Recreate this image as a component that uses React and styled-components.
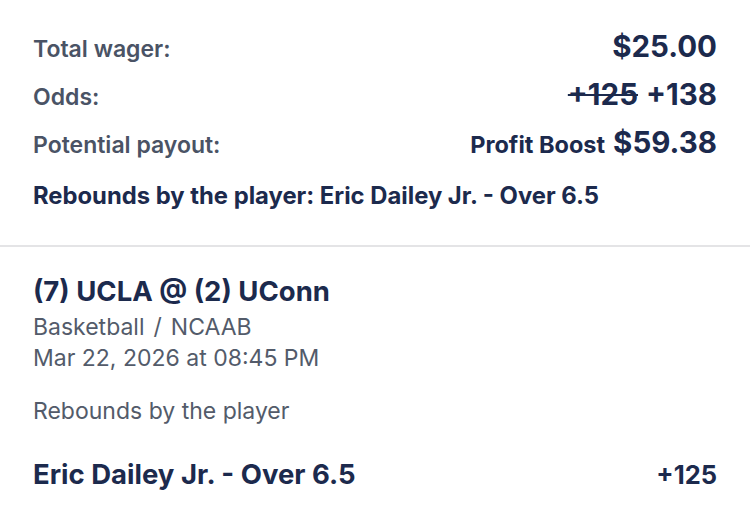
import React from "react";
import styled, { createGlobalStyle } from "styled-components";

const Global = createGlobalStyle`
  html, body { margin: 0; padding: 0; background: #ffffff; }
  body { font-family: Inter, "Noto Sans", sans-serif; -webkit-font-smoothing: antialiased; }
`;

const Page = styled.div`
  width: 750px;
  height: 508px;
  background: #fff;
  overflow: hidden;
`;

const Summary = styled.section`
  padding: 29px 33px 35px 33px;
  display: flex;
  flex-direction: column;
`;

const Row = styled.div`
  display: flex;
  justify-content: space-between;
  align-items: baseline;
  height: 48px;
  line-height: 1.2;
`;

const Label = styled.span`
  font-size: 23px;
  font-weight: 600;
  color: #4a5365;
`;

const Value = styled.span`
  display: flex;
  align-items: baseline;
  gap: 8px;
  font-size: 29.5px;
  font-weight: 700;
  color: #1c2a4d;
`;

const Struck = styled.span`
  text-decoration: line-through;
  text-decoration-thickness: 2px;
`;

const BoostTag = styled.span`
  font-size: 23.5px;
  font-weight: 700;
`;

const Selection = styled.div`
  font-size: 23.8px;
  line-height: 28px;
  font-weight: 700;
  color: #1c2a4d;
  margin-top: 9px;
`;

const Divider = styled.hr`
  border: 0;
  height: 2px;
  background: #e4e4e6;
  margin: 0;
`;

const Detail = styled.section`
  padding: 27px 33px 0 33px;
  display: flex;
  flex-direction: column;
`;

const Matchup = styled.div`
  font-size: 27.5px;
  font-weight: 700;
  color: #1c2a4d;
  line-height: 34px;
  margin-bottom: 4px;
`;

const Meta = styled.div`
  font-size: 23px;
  font-weight: 400;
  color: #535b6a;
  line-height: 31px;
  margin-top: ${(p) => p.$mt || 0}px;
`;

const Slash = styled.span`
  margin: 0 9px;
`;

const PickRow = styled.div`
  display: flex;
  justify-content: space-between;
  align-items: baseline;
  line-height: 34px;
  margin-top: 30px;
`;

const Pick = styled.span`
  font-size: 27.5px;
  font-weight: 700;
  color: #1c2a4d;
`;

const PickOdds = styled.span`
  font-size: 25.5px;
  font-weight: 700;
  color: #1c2a4d;
`;

export default function App() {
  return (
    <Page>
      <Global />
      <Summary>
        <Row>
          <Label>Total wager:</Label>
          <Value>$25.00</Value>
        </Row>
        <Row>
          <Label>Odds:</Label>
          <Value>
            <Struck>+125</Struck>
            <span>+138</span>
          </Value>
        </Row>
        <Row>
          <Label>Potential payout:</Label>
          <Value>
            <BoostTag>Profit Boost</BoostTag>
            <span>$59.38</span>
          </Value>
        </Row>
        <Selection>Rebounds by the player: Eric Dailey Jr. - Over 6.5</Selection>
      </Summary>
      <Divider />
      <Detail>
        <Matchup>(7) UCLA @ (2) UConn</Matchup>
        <Meta>
          Basketball<Slash>/</Slash>NCAAB
        </Meta>
        <Meta>Mar 22, 2026 at 08:45 PM</Meta>
        <Meta $mt={22}>Rebounds by the player</Meta>
        <PickRow>
          <Pick>Eric Dailey Jr. - Over 6.5</Pick>
          <PickOdds>+125</PickOdds>
        </PickRow>
      </Detail>
    </Page>
  );
}
